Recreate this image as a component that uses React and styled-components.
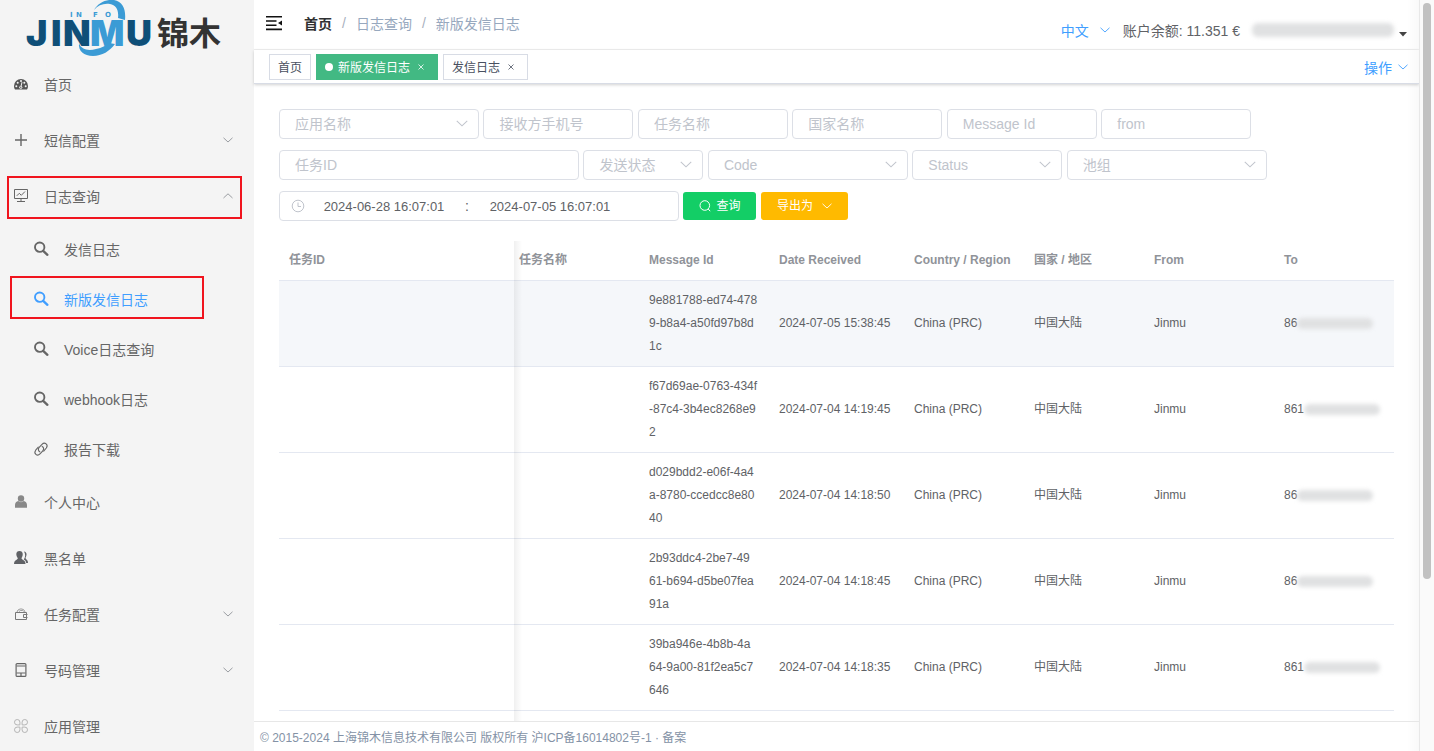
import React, { Fragment } from 'react'
import styled, { createGlobalStyle, css } from 'styled-components'

const GlobalStyle = createGlobalStyle`
  * {
    box-sizing: border-box;
  }
  body {
    margin: 0;
    overflow: hidden;
    background-color: #fff;
    color: #606266;
    font-family: 'Liberation Sans', 'Noto Sans CJK SC', sans-serif;
    font-size: 14px;
  }
  button,
  input,
  select {
    font-family: inherit;
  }
`
const Layout = styled.div`
  display: flex;
  height: 100vh;
`
const Sidebar = styled.aside`
  flex: 0 0 254px;
  overflow: hidden;
  background-color: #f4f4f4;
`
const LogoLink = styled.a`
  display: block;
  height: 56px;
  padding-left: 24px;
`
const MenuList = styled.ul`
  margin: 0;
  padding: 0;
  list-style: none;
`
const MenuItem = styled.li`
  position: relative;
`
const MenuLink = styled.a`
  display: flex;
  align-items: center;
  gap: 15px;
  height: ${props => (props.$sub ? '50px' : '56px')};
  padding: 0 21px 0 ${props => (props.$sub ? '33px' : '13px')};
  color: ${props => (props.$active ? '#409eff' : '#666')};
  font-size: 14px;
  text-decoration: none;
`
const MenuText = styled.span`
  flex: 1;
`
const MenuArrow = styled.span`
  display: flex;
  color: #909399;
`
const Highlight = styled.span`
  position: absolute;
  top: ${props => (props.$sub ? '2px' : '8px')};
  right: ${props => (props.$sub ? '50px' : '12px')};
  left: ${props => (props.$sub ? '10px' : '7px')};
  height: 43px;
  border: 2px solid #f0141e;
  pointer-events: none;
`
const Main = styled.div`
  display: flex;
  flex: 1;
  flex-direction: column;
  min-width: 0;
  background-image: linear-gradient(to left, #f9f9f9, #fff 12px);
`
const Header = styled.header`
  display: flex;
  align-items: center;
  height: 50px;
  padding: 0 11px 3px 12px;
  border-bottom: 1px solid #f0f0f0;
`
const IconButton = styled.button`
  display: flex;
  padding: 0;
  border: 0;
  background: none;
  color: #111;
  cursor: pointer;
`
const Breadcrumb = styled.nav`
  display: flex;
  flex: 1;
  align-items: center;
  margin-left: 22px;
`
const Crumb = styled.a`
  color: ${props => (props.$root ? '#303133' : '#97a8be')};
  font-weight: ${props => (props.$root ? 700 : 400)};
  text-decoration: none;
`
const Separator = styled.span`
  margin: 0 10px;
  color: #a8b0bd;
`
const HeaderRight = styled.div`
  display: flex;
  align-items: center;
  padding-top: 13px;
`
const DropdownButton = styled.button`
  display: flex;
  align-items: center;
  gap: ${props => (props.$wide ? '11px' : '6px')};
  padding: 0;
  border: 0;
  background: none;
  color: #409eff;
  font-size: 14px;
  cursor: pointer;
`
const Balance = styled.span`
  margin: 0 12px 0 13px;
`
const UserButton = styled.button`
  display: flex;
  align-items: flex-end;
  gap: 4px;
  padding: 0;
  border: 0;
  background: none;
  color: #444;
`
const Masked = styled.span`
  display: inline-block;
  width: ${props => (props.$wide ? '142px' : '76px')};
  height: ${props => (props.$wide ? '14px' : '11px')};
  border-radius: 6px;
  background-color: #e0e1e2;
  filter: blur(2px);
  vertical-align: middle;
`
const TagsBar = styled.div`
  display: flex;
  align-items: center;
  height: 34px;
  padding: 0 11px 0 15px;
  border-bottom: 1px solid #d8dce5;
  box-shadow: 0 1px 3px rgba(0, 0, 0, 0.18);
`
const Tags = styled.div`
  display: flex;
  flex: 1;
  gap: 5px;
`
const Tag = styled.div`
  display: flex;
  align-items: center;
  height: 26px;
  padding: 0 8px;
  border: 1px solid #d8dce5;
  color: #495060;
  font-size: 12px;
  ${props =>
    props.$active &&
    css`
      border-color: #42b983;
      background-color: #42b983;
      color: #fff;

      &::before {
        width: 8px;
        height: 8px;
        margin-right: 5px;
        border-radius: 50%;
        background-color: #fff;
        content: '';
      }
    `}
`
const TagLink = styled.a`
  color: inherit;
  text-decoration: none;
`
const TagClose = styled.button`
  display: flex;
  align-items: center;
  justify-content: center;
  width: 16px;
  height: 16px;
  margin-left: 3px;
  padding: 0;
  border: 0;
  background: none;
  color: inherit;
`
const Content = styled.main`
  flex: 1;
  min-height: 0;
  padding: 25px 25px 0;
  overflow: hidden;
`
const Filters = styled.form`
  margin-bottom: 9px;
  font-size: 16px;
  line-height: 0;
`
const Field = styled.span`
  display: inline-flex;
  position: relative;
  width: ${props => props.$width}px;
  height: 30px;
  margin-bottom: 11px;
  vertical-align: top;
`
const controlStyle = css`
  width: 100%;
  height: 100%;
  border: 1px solid #dcdfe6;
  border-radius: 4px;
  outline: none;
  background-color: #fff;
  font-size: 14px;
`
const TextInput = styled.input`
  ${controlStyle}
  padding: 0 15px;
  color: #606266;

  &::placeholder {
    color: #c0c4cc;
  }
`
const Select = styled.select`
  ${controlStyle}
  padding: 0 30px 0 15px;
  appearance: none;
  color: #c0c4cc;
`
const SelectArrow = styled.span`
  display: flex;
  position: absolute;
  top: 11px;
  right: 11px;
  color: #c0c4cc;
  pointer-events: none;
`
const DateRange = styled.span`
  ${controlStyle}
  display: flex;
  align-items: center;
  padding: 0 10px;
  color: #606266;
`
const DateInput = styled.input`
  flex: 0 0 156px;
  min-width: 0;
  padding: 0;
  border: 0;
  outline: none;
  color: #606266;
  font-size: 13px;
  text-align: center;
`
const DateSeparator = styled.span`
  width: 10px;
  text-align: center;
`
const ActionButton = styled.button`
  display: inline-flex;
  align-items: center;
  gap: ${props => (props.$gap ? props.$gap : 5)}px;
  height: 28px;
  margin: 1px 0 11px;
  padding: 0 16px;
  border: 0;
  border-radius: 3px;
  background-color: ${props => props.$color};
  color: #fff;
  font-size: 12px;
  line-height: 1;
  vertical-align: top;
  cursor: pointer;
`
const TableWrap = styled.div`
  position: relative;
`
const FixedShadow = styled.div`
  position: absolute;
  top: 0;
  left: 235px;
  width: 8px;
  height: 100vh;
  background-image: linear-gradient(to right, rgba(0, 0, 0, 0.06), rgba(0, 0, 0, 0));
  pointer-events: none;
`
const Table = styled.table`
  width: 100%;
  border-collapse: separate;
  border-spacing: 0;
  table-layout: fixed;
  font-size: 12px;
  line-height: 23px;
`
const Th = styled.th`
  padding: 8px 0 8px 10px;
  border-bottom: 1px solid #e4e8f1;
  color: #909399;
  text-align: left;
  white-space: nowrap;
`
const Tr = styled.tr`
  background-color: ${props => (props.$hover ? '#f5f7fa' : 'transparent')};
`
const Td = styled.td`
  padding: 8px 10px;
  border-bottom: 1px solid #e4e8f1;
  color: #606266;
  white-space: pre;
`
const Footer = styled.footer`
  height: 30px;
  padding-left: 6px;
  border-top: 1px solid #e7e7e7;
  color: #8492a6;
  font-size: 12px;
  line-height: 32px;
`
const ScrollTrack = styled.div`
  flex: 0 0 15px;
  padding: 3px 3px 0;
  border-left: 1px solid #e8e8e8;
  background-color: #fafafa;
`
const ScrollThumb = styled.div`
  width: 8px;
  height: 77%;
  border-radius: 4px;
  background-color: #c1c1c1;
`

const ICONS = {
  dashboard: (
    <g>
      <path d="M1 10a7 7 0 0 1 14 0c0 1.500-.4 2.700-1 3.500H2c-.6-.8-1-2-1-3.500z" fill="#555" />
      <g fill="#f4f4f4">
        <circle cx="3.300" cy="10.200" r="1" />
        <circle cx="4.700" cy="6.800" r="1" />
        <circle cx="8" cy="5" r="1" />
        <circle cx="11.300" cy="6.800" r="1" />
        <circle cx="12.700" cy="10.200" r="1" />
        <circle cx="7.800" cy="11.200" r="1.500" />
      </g>
      <path d="M7.800 11.200l1.200-5" stroke="#f4f4f4" />
      <circle cx="7.800" cy="11.200" r=".7" fill="#555" />
    </g>
  ),
  plus: <path d="M8 2v12M2 8h12" stroke="currentColor" strokeWidth="1.400" />,
  monitor: (
    <g fill="none" stroke="currentColor">
      <path d="M1.500 1.500h13v9h-13zM8 10.500v3M4 13.500h8" />
      <path d="M3.800 7.800l2.500-2.500 2 2 3.700-3.800" />
    </g>
  ),
  search: (
    <g fill="none" stroke="currentColor">
      <circle cx="6.700" cy="6.200" r="4.700" strokeWidth="1.900" />
      <path d="M10.200 9.800l4.200 4" strokeWidth="2.300" strokeLinecap="round" />
    </g>
  ),
  link: (
    <g fill="none" stroke="currentColor" strokeWidth="1.100" strokeLinecap="round">
      <path d="M6.800 10.800C4.900 9.800 5 7.600 6.400 6.100L9 3.300c2.800-2.900 6.700.4 4.300 3.700l-2.600 3.100" />
      <path d="M9.200 5.400c1.900 1 1.800 3.200.4 4.700L7 12.900c-2.800 2.900-6.700-.4-4.300-3.700l2.600-3.100" />
    </g>
  ),
  user: (
    <g fill="#888">
      <circle cx="8" cy="4.500" r="3.200" />
      <path d="M2 13.700V11C2 8.800 3.500 7.400 5.200 7.100c1.700 1.500 3.900 1.500 5.600 0C12.500 7.400 14 8.800 14 11v2.700z" />
    </g>
  ),
  users: (
    <g fill="#606266">
      <path d="M11 1.500c3.500.4 2.800 4.500 1.500 6.300 0 1.800 2.500 1.500 2.500 5.200h-1.800c-.4-2.600-1.400-3-2.400-3.600 1.800-2.400 1.800-5.400.2-7.900z" />
      <path d="M6.500 1C10.800 1 10.200 6 8.500 8c0 2.200 4 1.800 4 6H1c0-4.200 3.800-3.800 3.800-6C3 6 2.200 1 6.500 1z" />
    </g>
  ),
  wallet: (
    <g fill="none" stroke="#777">
      <path d="M2.500 6.500h11v7h-11zM14.500 8.500h-4v3h4" />
      <path d="M4 6l1-2 2-1h2l2 1 1 2M6 5.500l1.500-1h2l1 1" strokeWidth=".7" />
    </g>
  ),
  mobile: (
    <g fill="none" stroke="currentColor" strokeWidth="1.200">
      <rect x="3.100" y="1.600" width="9.800" height="12.800" rx="1" />
      <path d="M3.500 4h9M3.500 11h9M8 11.500v2.500" />
    </g>
  ),
  apps: (
    <g fill="none" stroke="#b5b5b5">
      <path d="M6.900 6.900H4.200a2.700 2.700 0 1 1 2.700-2.700zM9.100 6.900h2.700a2.700 2.700 0 1 0-2.700-2.700z" />
      <path d="M6.900 9.100H4.200a2.700 2.700 0 1 0 2.700 2.700zM9.100 9.100h2.700a2.700 2.700 0 1 1-2.700 2.700z" />
    </g>
  ),
}

const Icon = ({ name }) => (
  <svg width="16" height="16" viewBox="0 0 16 16" aria-hidden="true">
    {ICONS[name]}
  </svg>
)

const Chevron = ({ up, large }) => (
  <svg
    width={large ? 12 : 10}
    height={large ? 7 : 6}
    viewBox="0 0 10 6"
    fill="none"
    stroke="currentColor"
    strokeWidth=".9"
    aria-hidden="true"
  >
    <path d={up ? 'M.5 5L5 .8 9.500 5' : 'M.5 .8L5 5 9.500 .8'} />
  </svg>
)

const Logo = () => (
  <svg width="204" height="56" viewBox="0 0 204 56" role="img" aria-label="INFO JINMU 锦木">
    <g fill="#3b9bd5">
      <path d="M70 10C74 3 82-1 90 0c9 2 12 9 11 20l-7-2c1-8-2-13-8-14-6-1-12 1-16 6z" />
      <path d="M55 43c2 7 10 8 17 6 6-1 10-4 13-6l6 1c-5 7-13 12-22 12s-15-5-14-13z" />
    </g>
    <g fontFamily="Inter, sans-serif" fontWeight="900" fontSize="36">
      <g fill="#0f4f78">
        <text x="2" y="46">J</text>
        <text x="27" y="46">I</text>
        <text x="39" y="46">N</text>
        <text x="102" y="46">U</text>
      </g>
      <text x="66" y="46" fill="#3b9bd5">M</text>
    </g>
    <text y="17" fill="#3b9bd5" fontFamily="DejaVu Sans, sans-serif" fontWeight="700" fontSize="7">
      <tspan x="46">I</tspan>
      <tspan x="52">N</tspan>
      <tspan x="69">F</tspan>
      <tspan x="81">O</tspan>
    </text>
    <text x="133" y="45" fill="#333" fontFamily="Noto Sans CJK SC, sans-serif" fontWeight="700" fontSize="32">
      锦木
    </text>
  </svg>
)

const subMenu = [
  { icon: 'search', text: '发信日志' },
  { icon: 'search', text: '新版发信日志', active: true, marked: true },
  { icon: 'search', text: 'Voice日志查询' },
  { icon: 'search', text: 'webhook日志' },
  { icon: 'link', text: '报告下载' },
]

const menu = [
  { icon: 'dashboard', text: '首页' },
  { icon: 'plus', text: '短信配置', arrow: true },
  { icon: 'monitor', text: '日志查询', arrow: true, marked: true, children: subMenu },
  { icon: 'user', text: '个人中心' },
  { icon: 'users', text: '黑名单' },
  { icon: 'wallet', text: '任务配置', arrow: true },
  { icon: 'mobile', text: '号码管理', arrow: true },
  { icon: 'apps', text: '应用管理' },
]

const fields = [
  { label: '应用名称', width: 200, select: true },
  { label: '接收方手机号', width: 150 },
  { label: '任务名称', width: 150 },
  { label: '国家名称', width: 150 },
  { label: 'Message Id', width: 150 },
  { label: 'from', width: 150 },
  { label: '任务ID', width: 300 },
  { label: '发送状态', width: 120, select: true },
  { label: 'Code', width: 200, select: true },
  { label: 'Status', width: 150, select: true },
  { label: '池组', width: 200, select: true },
]

const columns = [
  { title: '任务ID', width: 230 },
  { title: '任务名称', width: 130 },
  { title: 'Message Id', width: 130 },
  { title: 'Date Received', width: 135 },
  { title: 'Country / Region', width: 120 },
  { title: '国家 / 地区', width: 120 },
  { title: 'From', width: 130 },
  { title: 'To', width: 120 },
]

const rows = [
  { id: '9e881788-ed74-478\n9-b8a4-a50fd97b8d\n1c', date: '2024-07-05 15:38:45', to: '86' },
  { id: 'f67d69ae-0763-434f\n-87c4-3b4ec8268e9\n2', date: '2024-07-04 14:19:45', to: '861' },
  { id: 'd029bdd2-e06f-4a4\na-8780-ccedcc8e80\n40', date: '2024-07-04 14:18:50', to: '86' },
  { id: '2b93ddc4-2be7-49\n61-b694-d5be07fea\n91a', date: '2024-07-04 14:18:45', to: '86' },
  { id: '39ba946e-4b8b-4a\n64-9a00-81f2ea5c7\n646', date: '2024-07-04 14:18:35', to: '861' },
]

const MenuEntry = ({ item, sub }) => (
  <MenuItem>
    <MenuLink href="#" $sub={sub} $active={item.active}>
      <Icon name={item.icon} />
      <MenuText>{item.text}</MenuText>
      {item.arrow && (
        <MenuArrow>
          <Chevron up={!!item.children} />
        </MenuArrow>
      )}
    </MenuLink>
    {item.marked && <Highlight $sub={sub} />}
    {item.children && (
      <MenuList>
        {item.children.map(child => (
          <MenuEntry key={child.text} item={child} sub />
        ))}
      </MenuList>
    )}
  </MenuItem>
)

const CloseButton = () => (
  <TagClose type="button" aria-label="关闭">
    <svg width="6" height="6" viewBox="0 0 6 6" stroke="currentColor" strokeWidth=".8">
      <path d="M.5 .5l5 5M5.500 .5l-5 5" />
    </svg>
  </TagClose>
)

const FilterForm = () => (
  <Filters>
    {fields.map(({ label, width, select }) => (
      <Fragment key={label}>
        <Field $width={width}>
          {select ? (
            <>
              <Select aria-label={label}>
                <option>{label}</option>
              </Select>
              <SelectArrow>
                <Chevron large />
              </SelectArrow>
            </>
          ) : (
            <TextInput type="text" placeholder={label} aria-label={label} />
          )}
        </Field>{' '}
      </Fragment>
    ))}
    <Field $width={400}>
      <DateRange>
        <svg width="16" height="14" viewBox="0 0 16 14" fill="none" stroke="#c0c4cc" aria-hidden="true">
          <circle cx="8" cy="7" r="5.800" />
          <path d="M8 3.500V7.500h3" />
        </svg>
        <DateInput type="text" defaultValue="2024-06-28 16:07:01" aria-label="开始日期" />
        <DateSeparator>:</DateSeparator>
        <DateInput type="text" defaultValue="2024-07-05 16:07:01" aria-label="结束日期" />
      </DateRange>
    </Field>{' '}
    <ActionButton type="button" $color="#13ce66">
      <svg width="12" height="12" viewBox="0 0 12 12" fill="none" stroke="currentColor" aria-hidden="true">
        <circle cx="5.800" cy="5.500" r="4.800" />
        <path d="M9.200 9l2 2.200" />
      </svg>
      查询
    </ActionButton>{' '}
    <ActionButton type="button" $color="#ffba00" $gap={9}>
      导出为
      <Chevron />
    </ActionButton>
  </Filters>
)

const LogTable = () => (
  <TableWrap>
    <Table>
      <colgroup>
        {columns.map(({ title, width }) => (
          <col key={title} width={width} />
        ))}
      </colgroup>
      <thead>
        <tr>
          {columns.map(({ title }) => (
            <Th key={title}>{title}</Th>
          ))}
        </tr>
      </thead>
      <tbody>
        {rows.map((row, index) => (
          <Tr key={row.id} $hover={index === 0}>
            <Td />
            <Td />
            <Td>{row.id}</Td>
            <Td>{row.date}</Td>
            <Td>China (PRC)</Td>
            <Td>中国大陆</Td>
            <Td>Jinmu</Td>
            <Td>
              {row.to}
              <Masked />
            </Td>
          </Tr>
        ))}
      </tbody>
    </Table>
    <FixedShadow />
  </TableWrap>
)

const App = () => (
  <Layout>
    <GlobalStyle />
    <Sidebar>
      <LogoLink href="#">
        <Logo />
      </LogoLink>
      <MenuList>
        {menu.map(item => (
          <MenuEntry key={item.text} item={item} />
        ))}
      </MenuList>
    </Sidebar>
    <Main>
      <Header>
        <IconButton type="button" aria-label="折叠菜单">
          <svg width="16" height="16" viewBox="0 0 16 16" fill="currentColor">
            <path d="M0 1h16v1.600H0zM0 5.200h10.500v1.600H0zM0 9.400h10.500V11H0zM0 13.600h16v1.600H0zM16 5.400v5.200L12 8z" />
          </svg>
        </IconButton>
        <Breadcrumb>
          <Crumb href="#" $root>
            首页
          </Crumb>
          <Separator>/</Separator>
          <Crumb href="#">日志查询</Crumb>
          <Separator>/</Separator>
          <Crumb href="#">新版发信日志</Crumb>
        </Breadcrumb>
        <HeaderRight>
          <DropdownButton type="button" $wide>
            中文
            <Chevron />
          </DropdownButton>
          <Balance>账户余额: 11.351 €</Balance>
          <UserButton type="button" aria-label="用户菜单">
            <Masked $wide />
            <svg width="10" height="5" viewBox="0 0 10 5" fill="currentColor">
              <path d="M1 0h8L5 4.600z" />
            </svg>
          </UserButton>
        </HeaderRight>
      </Header>
      <TagsBar>
        <Tags>
          <Tag>
            <TagLink href="#">首页</TagLink>
          </Tag>
          <Tag $active>
            <TagLink href="#">新版发信日志</TagLink>
            <CloseButton />
          </Tag>
          <Tag>
            <TagLink href="#">发信日志</TagLink>
            <CloseButton />
          </Tag>
        </Tags>
        <DropdownButton type="button">
          操作
          <Chevron />
        </DropdownButton>
      </TagsBar>
      <Content>
        <FilterForm />
        <LogTable />
      </Content>
      <Footer>© 2015-2024 上海锦木信息技术有限公司 版权所有 沪ICP备16014802号-1 · 备案</Footer>
    </Main>
    <ScrollTrack>
      <ScrollThumb />
    </ScrollTrack>
  </Layout>
)

export default App
